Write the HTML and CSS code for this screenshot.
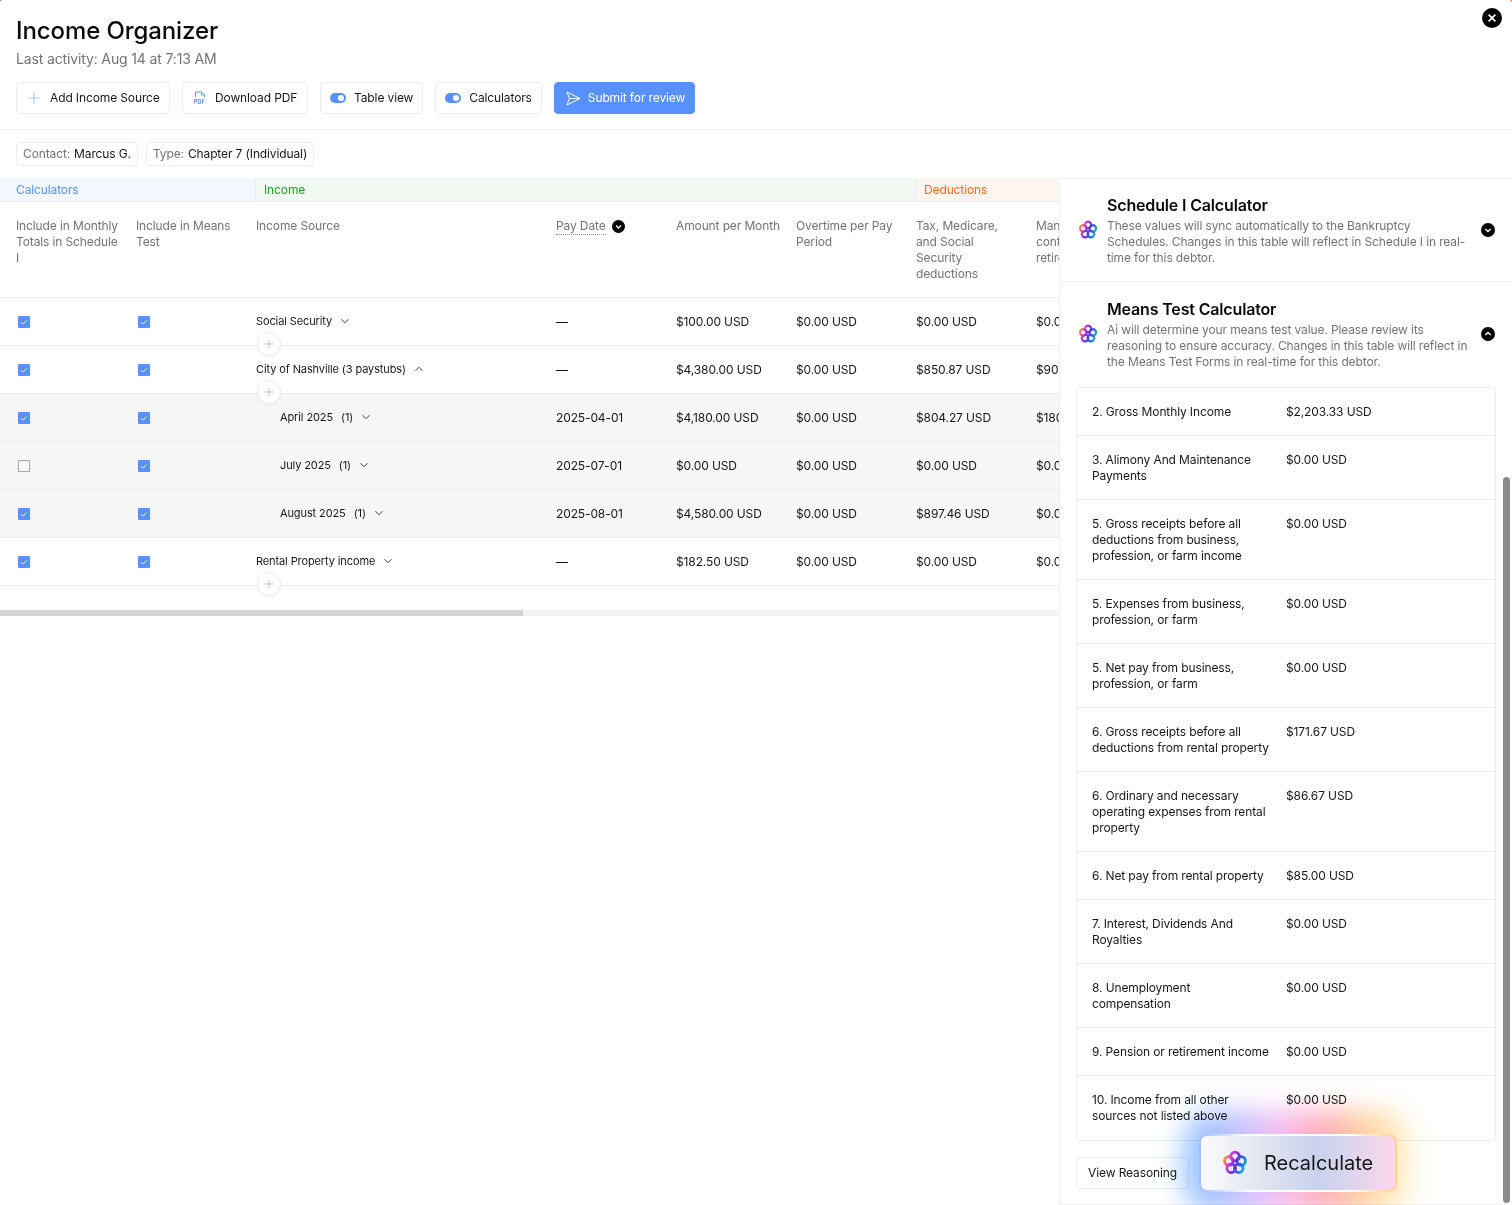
FILE: index.html
```html
<!DOCTYPE html>
<html lang="en">
<head>
<meta charset="utf-8">
<title>Income Organizer</title>
<link rel="stylesheet" href="styles.css">
</head>
<body>
<svg class="defs" width="0" height="0" aria-hidden="true">
  <defs>
    <linearGradient id="loop" x1="2" y1="8" x2="22" y2="16" gradientUnits="userSpaceOnUse">
      <stop offset="0" stop-color="#ff9a2e"/>
      <stop offset=".22" stop-color="#e23bd0"/>
      <stop offset=".5" stop-color="#6a2fe0"/>
      <stop offset=".78" stop-color="#1f6fe8"/>
      <stop offset="1" stop-color="#19c3d8"/>
    </linearGradient>
    <symbol id="logo" viewBox="0 0 24 24">
      <g fill="none" stroke="url(#loop)" stroke-width="2.6">
        <circle cx="12" cy="6" r="4"/>
        <circle cx="17.700" cy="10.150" r="4"/>
        <circle cx="15.500" cy="16.850" r="4"/>
        <circle cx="8.500" cy="16.850" r="4"/>
        <circle cx="6.300" cy="10.150" r="4"/>
      </g>
    </symbol>
    <symbol id="chev-down" viewBox="0 0 10 10"><path d="M1.500 3.200 5 6.800l3.500-3.600" fill="none" stroke="currentColor" stroke-width="1"/></symbol>
    <symbol id="chev-up" viewBox="0 0 10 10"><path d="M1.500 6.800 5 3.200l3.500 3.600" fill="none" stroke="currentColor" stroke-width="1"/></symbol>
    <symbol id="chev-bold-down" viewBox="0 0 14 14"><circle cx="7" cy="7" r="7" fill="#000"/><path d="M4.300 5.900 7 8.600l2.700-2.700" fill="none" stroke="#fff" stroke-width="1.400"/></symbol>
    <symbol id="chev-bold-up" viewBox="0 0 14 14"><circle cx="7" cy="7" r="7" fill="#000"/><path d="M4.300 8.100 7 5.400l2.700 2.700" fill="none" stroke="#fff" stroke-width="1.400"/></symbol>
    <symbol id="tick" viewBox="0 0 12 12"><rect width="12" height="12" rx="1" fill="#5791ff"/><path d="M3.400 6.200 5.200 8l3.400-3.600" fill="none" stroke="#fff" stroke-width="1"/></symbol>
    <symbol id="plus" viewBox="0 0 12 12"><path d="M6 .5v11M.5 6h11" stroke="#a9c5ff" stroke-width="1.200"/></symbol>
    <symbol id="toggle" viewBox="0 0 16 10"><rect width="16" height="10" rx="5" fill="#5791ff"/><circle cx="11" cy="5" r="3" fill="#fff"/></symbol>
  </defs>
</svg>

<div class="modal">
  <button class="close" aria-label="Close">
    <svg width="20" height="20" viewBox="0 0 20 20"><circle cx="10" cy="10" r="10" fill="#000"/><path d="M6.600 6.600l6.800 6.800M13.400 6.600l-6.800 6.800" stroke="#fff" stroke-width="1.700"/></svg>
  </button>

  <header class="head">
    <h1 class="title">Income Organizer</h1>
    <p class="sub">Last activity: Aug 14 at 7:13 AM</p>
    <div class="actions">
      <button class="btn btn-add"><svg class="ico" width="12" height="12"><use href="#plus"/></svg>Add Income Source</button>
      <button class="btn btn-pdf">
        <svg class="ico" width="12" height="14" viewBox="0 0 12 14"><path d="M1.500 6V1h6L10.500 4v2" fill="none" stroke="#5791ff" stroke-width="1"/><path d="M7.500 1v3h3" fill="none" stroke="#5791ff" stroke-width=".8"/><text x="0" y="12.500" class="pdf-txt">PDF</text></svg>Download PDF</button>
      <button class="btn btn-tog"><svg class="ico" width="16" height="10"><use href="#toggle"/></svg>Table view</button>
      <button class="btn btn-tog"><svg class="ico" width="16" height="10"><use href="#toggle"/></svg>Calculators</button>
      <button class="btn btn-primary"><svg class="ico" width="15" height="15" viewBox="0 0 15 15"><path d="M1 1l13 6.500L1 14l2.500-6.500zM3.500 7.500H14" fill="none" stroke="#fff" stroke-width="1" stroke-linejoin="round"/></svg>Submit for review</button>
    </div>
  </header>

  <div class="filters">
    <span class="chip"><span class="chip-k">Contact:</span> Marcus G.</span>
    <span class="chip"><span class="chip-k">Type:</span> Chapter 7 (Individual)</span>
  </div>

  <div class="main">
    <section class="table-area">
      <div class="table-clip">
        <div class="bands">
          <div class="band band-calc">Calculators</div>
          <div class="band band-inc">Income</div>
          <div class="band band-ded">Deductions</div>
        </div>
        <div class="row row-head">
          <div class="cell">Include in Monthly Totals in Schedule I</div>
          <div class="cell">Include in Means Test</div>
          <div class="cell">Income Source</div>
          <div class="cell cell-date"><span class="dotted">Pay Date</span><svg width="13" height="13"><use href="#chev-bold-down"/></svg></div>
          <div class="cell">Amount per Month</div>
          <div class="cell">Overtime per Pay Period</div>
          <div class="cell">Tax, Medicare, and Social Security deductions</div>
          <div class="cell">Mandatory contributions for retirement</div>
        </div>

        <div class="row">
          <div class="cell cell-chk"><svg width="12" height="12"><use href="#tick"/></svg></div>
          <div class="cell cell-chk"><svg width="12" height="12"><use href="#tick"/></svg></div>
          <div class="cell cell-src"><span class="src">Social Security</span><svg class="chev" width="10" height="10"><use href="#chev-down"/></svg><span class="add"><svg width="10" height="10"><use href="#plus"/></svg></span></div>
          <div class="cell">—</div>
          <div class="cell">$100.00 USD</div>
          <div class="cell">$0.00 USD</div>
          <div class="cell">$0.00 USD</div>
          <div class="cell">$0.00 USD</div>
        </div>
        <div class="row">
          <div class="cell cell-chk"><svg width="12" height="12"><use href="#tick"/></svg></div>
          <div class="cell cell-chk"><svg width="12" height="12"><use href="#tick"/></svg></div>
          <div class="cell cell-src"><span class="src">City of Nashville (3 paystubs)</span><svg class="chev" width="10" height="10"><use href="#chev-up"/></svg><span class="add"><svg width="10" height="10"><use href="#plus"/></svg></span></div>
          <div class="cell">—</div>
          <div class="cell">$4,380.00 USD</div>
          <div class="cell">$0.00 USD</div>
          <div class="cell">$850.87 USD</div>
          <div class="cell">$90.00 USD</div>
        </div>
        <div class="row row-sub">
          <div class="cell cell-chk"><svg width="12" height="12"><use href="#tick"/></svg></div>
          <div class="cell cell-chk"><svg width="12" height="12"><use href="#tick"/></svg></div>
          <div class="cell cell-src cell-indent"><span class="src">April 2025</span><span class="src count">(1)</span><svg class="chev" width="10" height="10"><use href="#chev-down"/></svg></div>
          <div class="cell">2025-04-01</div>
          <div class="cell">$4,180.00 USD</div>
          <div class="cell">$0.00 USD</div>
          <div class="cell">$804.27 USD</div>
          <div class="cell">$180.00 USD</div>
        </div>
        <div class="row row-sub">
          <div class="cell cell-chk"><span class="unchecked"></span></div>
          <div class="cell cell-chk"><svg width="12" height="12"><use href="#tick"/></svg></div>
          <div class="cell cell-src cell-indent"><span class="src">July 2025</span><span class="src count">(1)</span><svg class="chev" width="10" height="10"><use href="#chev-down"/></svg></div>
          <div class="cell">2025-07-01</div>
          <div class="cell">$0.00 USD</div>
          <div class="cell">$0.00 USD</div>
          <div class="cell">$0.00 USD</div>
          <div class="cell">$0.00 USD</div>
        </div>
        <div class="row row-sub">
          <div class="cell cell-chk"><svg width="12" height="12"><use href="#tick"/></svg></div>
          <div class="cell cell-chk"><svg width="12" height="12"><use href="#tick"/></svg></div>
          <div class="cell cell-src cell-indent"><span class="src">August 2025</span><span class="src count">(1)</span><svg class="chev" width="10" height="10"><use href="#chev-down"/></svg></div>
          <div class="cell">2025-08-01</div>
          <div class="cell">$4,580.00 USD</div>
          <div class="cell">$0.00 USD</div>
          <div class="cell">$897.46 USD</div>
          <div class="cell">$0.00 USD</div>
        </div>
        <div class="row">
          <div class="cell cell-chk"><svg width="12" height="12"><use href="#tick"/></svg></div>
          <div class="cell cell-chk"><svg width="12" height="12"><use href="#tick"/></svg></div>
          <div class="cell cell-src"><span class="src">Rental Property income</span><svg class="chev" width="10" height="10"><use href="#chev-down"/></svg><span class="add"><svg width="10" height="10"><use href="#plus"/></svg></span></div>
          <div class="cell">—</div>
          <div class="cell">$182.50 USD</div>
          <div class="cell">$0.00 USD</div>
          <div class="cell">$0.00 USD</div>
          <div class="cell">$0.00 USD</div>
        </div>
      </div>
      <div class="hscroll"><div class="hthumb"></div></div>
    </section>

    <aside class="panel">
      <div class="calc calc-first">
        <svg class="calc-logo" width="20" height="20"><use href="#logo"/></svg>
        <div class="calc-text">
          <h2 class="calc-title">Schedule I Calculator</h2>
          <p class="calc-desc">These values will sync automatically to the Bankruptcy Schedules. Changes in this table will reflect in Schedule I in real-time for this debtor.</p>
        </div>
        <svg class="calc-chev" width="14" height="14"><use href="#chev-bold-down"/></svg>
      </div>
      <div class="calc calc-second">
        <svg class="calc-logo" width="20" height="20"><use href="#logo"/></svg>
        <div class="calc-text">
          <h2 class="calc-title">Means Test Calculator</h2>
          <p class="calc-desc">Ai will determine your means test value. Please review its reasoning to ensure accuracy. Changes in this table will reflect in the Means Test Forms in real-time for this debtor.</p>
        </div>
        <svg class="calc-chev" width="14" height="14"><use href="#chev-bold-up"/></svg>
      </div>
      <div class="card">
        <div class="line"><span>2. Gross Monthly Income</span><span>$2,203.33 USD</span></div>
        <div class="line"><span>3. Alimony And Maintenance Payments</span><span>$0.00 USD</span></div>
        <div class="line"><span>5. Gross receipts before all deductions from business, profession, or farm income</span><span>$0.00 USD</span></div>
        <div class="line"><span>5. Expenses from business, profession, or farm</span><span>$0.00 USD</span></div>
        <div class="line"><span>5. Net pay from business, profession, or farm</span><span>$0.00 USD</span></div>
        <div class="line"><span>6. Gross receipts before all deductions from rental property</span><span>$171.67 USD</span></div>
        <div class="line"><span>6. Ordinary and necessary operating expenses from rental property</span><span>$86.67 USD</span></div>
        <div class="line"><span>6. Net pay from rental property</span><span>$85.00 USD</span></div>
        <div class="line"><span>7. Interest, Dividends And Royalties</span><span>$0.00 USD</span></div>
        <div class="line"><span>8. Unemployment compensation</span><span>$0.00 USD</span></div>
        <div class="line"><span>9. Pension or retirement income</span><span>$0.00 USD</span></div>
        <div class="line"><span>10. Income from all other sources not listed above</span><span>$0.00 USD</span></div>
      </div>
      <div class="panel-foot"><button class="btn btn-reason">View Reasoning</button></div>
      <div class="recalc-glow"></div>
      <button class="recalc"><svg width="26" height="26"><use href="#logo"/></svg><span>Recalculate</span></button>
      <div class="vthumb"></div>
    </aside>
  </div>
</div>
</body>
</html>
```

FILE: styles.css
```css
* { box-sizing: border-box; letter-spacing: -.01em; }
html, body { margin: 0; padding: 0; height: 100%; }
body { font-family: Inter, "Liberation Sans", sans-serif; font-size: 12px; line-height: 16px; color: #171717; overflow: hidden; background: linear-gradient(90deg, #999 50%, #e8641a 50%); }
.defs { position: absolute; }
button { font: inherit; color: inherit; background: none; border: 0; padding: 0; }

.modal { position: relative; height: 1205px; display: flex; flex-direction: column; overflow: hidden; background: #fff; border-radius: 3px 3px 0 0; }
.close { position: absolute; top: 8px; right: 10px; width: 20px; height: 20px; display: flex; }

.head { padding: 16px 16px 15px; border-bottom: 1px solid #f0f0f0; height: 130px; }
.title { margin: 0; font-size: 24px; line-height: 30px; font-weight: 500; color: #0a0a0a; letter-spacing: -.1px; }
.sub { margin: 0; padding-top: 2px; font-size: 14px; line-height: 22px; color: #737373; }
.actions { display: flex; gap: 12px; margin-top: 12px; }

.btn { height: 32px; display: inline-flex; align-items: center; gap: 10px; border: 1px solid #ececec; border-radius: 4px; background: #fff; color: #171717; white-space: nowrap; }
.btn-add { width: 154px; padding-left: 11px; }
.btn-pdf { width: 126px; padding-left: 11px; gap: 9px; }
.btn-tog { padding: 0 9px; gap: 8px; }
.btn-primary { width: 141px; padding-left: 11px; background: #5791ff; border-color: #5791ff; color: #fff; gap: 7px; }
.btn-reason { padding: 0 12px; width: 113px; justify-content: center; }
.ico { flex: none; }
.pdf-txt { font-size: 5.5px; font-weight: 700; fill: #5791ff; }

.filters { display: flex; gap: 8px; padding: 12px 16px; height: 48px; }
.chip { height: 24px; display: inline-flex; align-items: center; gap: 4px; padding: 0 6px; border: 1px solid #ececec; border-radius: 4px; white-space: nowrap; }
.chip-k { color: #737373; }

.main { flex: 1; display: flex; min-height: 0; }
.table-area { width: 1059px; flex: none; }
.table-clip { overflow: hidden; height: 432px; }

.bands { display: grid; grid-template-columns: 256px 660px 300px; width: 1216px; height: 24px; border-bottom: 1px solid #ececec; }
.band { line-height: 23px; padding-left: 8px; border-right: 1px solid #ececec; }
.band-calc { background: #f3f7ff; color: #5791ff; padding-left: 16px; }
.band-inc { background: #f1f8f1; color: #13a524; }
.band-ded { background: #fff5f0; color: #ff6a1a; }

.row { display: grid; grid-template-columns: 136px 120px 300px repeat(5, 120px); width: 1216px; height: 48px; border-bottom: 1px solid #ececec; align-items: center; }
.cell { padding-right: 15px; position: relative; }
.cell:first-child { padding-left: 16px; }
.row-head { height: 96px; align-items: start; padding-top: 16px; color: #737373; }
.row-sub { background: #f6f6f6; }
.cell-date { display: flex; align-items: center; gap: 6px; }
.dotted { border-bottom: 1px dotted #8a8a8a; }
.cell-chk { padding-left: 2px; display: flex; align-items: center; }
.cell-chk:first-child { padding-left: 18px; }
.unchecked { width: 12px; height: 12px; border: 1px solid #a3a3a3; border-radius: 1px; background: #fff; }
.cell-src { display: flex; align-items: center; gap: 8px; height: 16px; margin-top: -1px; }
.cell-indent { padding-left: 24px; }
.src { font-size: 11px; }
.chev { color: #404040; flex: none; }
.add { position: absolute; left: 1px; top: 19px; width: 24px; height: 24px; display: flex; align-items: center; justify-content: center; border-radius: 50%; background: #fff; border: 1px solid #ececec; box-shadow: 0 1px 2px rgba(0,0,0,.05); z-index: 2; }

.hscroll { height: 6px; background: #f3f3f3; }
.hthumb { width: 523px; height: 6px; background: #d4d4d4; }

.panel { position: relative; flex: 1; border-left: 1px solid #f0f0f0; border-top: 1px solid #f0f0f0; border-bottom: 1px solid #f0f0f0; }
.calc { display: flex; align-items: center; gap: 9px; padding: 15px 17px 16px 18px; }
.calc-first { border-bottom: 1px solid #f0f0f0; height: 103px; }
.calc-second { height: 105px; padding-top: 16px; padding-bottom: 17px; }
.calc-logo { flex: none; }
.calc-text { width: 362px; flex: none; }
.calc-chev { flex: none; margin-left: 3px; }
.calc-title { margin: 0 0 2px; font-size: 16px; line-height: 22px; font-weight: 600; color: #0a0a0a; }
.calc-desc { margin: 0; color: #737373; }

.card { margin: 0 16px; border: 1px solid #ececec; border-radius: 4px; }
.line { display: grid; grid-template-columns: 178px 1fr; column-gap: 16px; padding: 16px 16px 15px 15px; border-bottom: 1px solid #ececec; }
.line:last-child { border-bottom: 0; padding-bottom: 16px; }
.panel-foot { padding: 16px; }

.recalc-glow { position: absolute; left: 124px; top: 932px; width: 226px; height: 102px; border-radius: 30px; filter: blur(14px); mix-blend-mode: multiply; background: linear-gradient(90deg, #86c2ff 0%, #bcc0ff 22%, #f6bcf4 42%, #ffa8b4 62%, #ffd6a0 82%, #fff3cc 100%); }
.recalc { position: absolute; left: 139px; top: 955px; width: 198px; height: 58px; display: flex; align-items: center; gap: 16px; padding-left: 21px; font-size: 20px; letter-spacing: 0; color: #171717; border-radius: 8px; border: 2px solid transparent; background: linear-gradient(90deg, #fbfbfb 0%, #dfe2ee 35%, #c8d2f0 60%, #fbd7e8 100%) padding-box, linear-gradient(90deg, #a9bcff 0%, #fff 25%, #fff 75%, #ffcf8f 100%) border-box; }
.recalc span { letter-spacing: 0; }
.vthumb { position: absolute; right: 2px; top: 298px; width: 7px; height: 726px; border-radius: 4px; background: #8a8a8a; }
```
